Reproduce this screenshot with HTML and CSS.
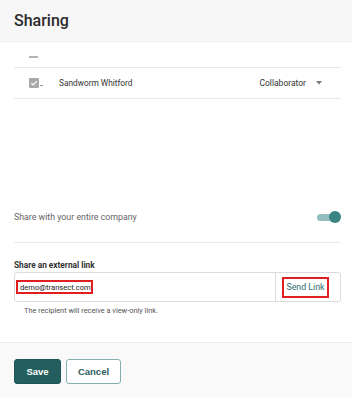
FILE: index.html
```html
<!DOCTYPE html>
<html>
<head>
<meta charset="utf-8">
<link rel="stylesheet" href="styles.css">
</head>
<body>
<div class="dialog">
  <header class="header"><h1 class="title">Sharing</h1></header>
  <main class="content">
    <div class="row row-head"><span class="dash"></span></div>
    <div class="row row-user">
      <span class="check"><svg width="10" height="10" viewBox="0 0 10 10"><rect width="10" height="10" rx="1" fill="#a9a9a9"/><path d="M2.3 5.2 L4.2 7 L7.8 3.2" fill="none" stroke="#fff" stroke-width="1.1"/></svg><span class="check-tail"></span></span>
      <span class="name">Sandworm Whitford</span>
      <span class="role">Collaborator <svg class="caret" width="6" height="4" viewBox="0 0 6 4"><path d="M0 0 H6 L3 3.5 Z" fill="#777"/></svg></span>
    </div>
    <div class="spacer"></div>
    <div class="company">
      <span class="company-label">Share with your entire company</span>
      <span class="toggle"><span class="track"></span><span class="knob"></span></span>
    </div>
    <div class="external">
      <div class="ext-label">Share an external link</div>
      <div class="ext-input">
        <div class="email-wrap"><span class="email">demo@transect.com</span></div>
        <div class="send-wrap"><span class="send">Send Link</span></div>
      </div>
      <div class="hint">The recipient will receive a view-only link.</div>
    </div>
  </main>
  <footer class="footer">
    <button class="btn btn-save">Save</button>
    <button class="btn btn-cancel">Cancel</button>
  </footer>
</div>
</body>
</html>
```
FILE: styles.css
```css
* { box-sizing: border-box; }
html, body { margin: 0; padding: 0; background: #fff; }
body { font-family: Roboto, "Liberation Sans", sans-serif; width: 352px; height: 397px; overflow: hidden; }
.dialog { display: flex; flex-direction: column; height: 397px; }
.header { height: 42px; background: #f7f7f7; border-bottom: 1px solid #eeeeee; display: flex; align-items: center; padding-left: 14px; }
.title { margin: 0; font-size: 16px; font-weight: 500; color: #2b2b2b; }
.content { flex: 1; padding: 0 11px 0 14px; display: flex; flex-direction: column; }
.row { display: flex; align-items: center; border-bottom: 1px solid #e8e8e8; }
.row-head { height: 26px; padding-left: 15px; }
.dash { width: 9px; height: 1.5px; background: #b5b5b5; margin-top: 5px; }
.row-user { height: 31px; padding-left: 15px; }
.check { display: flex; align-items: center; width: 30px; }
.check svg { display: block; }
.check-tail { width: 3px; height: 1px; background: #999; margin-left: 1px; margin-top: 5px; }
.name { font-size: 8.3px; color: #333; flex: 1; }
.role { font-size: 8.5px; color: #333; display: flex; align-items: center; margin-right: 19px; }
.caret { margin-left: 10px; }
.spacer { height: 105px; }
.company { height: 39px; display: flex; align-items: center; justify-content: space-between; border-bottom: 1px solid #eaeaea; padding-bottom: 13px; }
.company-label { font-size: 8.8px; color: #666; }
.toggle { position: relative; width: 24px; height: 14px; display: block; }
.track { position: absolute; left: 0; top: 4px; width: 22px; height: 7px; border-radius: 4px; background: #93bdbd; }
.knob { position: absolute; right: 0; top: 1px; width: 12px; height: 12px; border-radius: 50%; background: #3b8484; }
.external { padding-top: 17px; }
.ext-label { font-size: 8.3px; font-weight: 700; color: #333; height: 11px; line-height: 11px; }
.ext-input { margin-top: 1px; height: 30px; border: 1px solid #dcdcdc; border-radius: 3px; display: flex; }
.email-wrap { flex: 1; display: flex; align-items: center; padding-left: 1px; }
.email { border: 2px solid #e02020; font-size: 7.6px; color: #222; padding: 0 2px; height: 14px; width: 77px; display: flex; align-items: center; white-space: nowrap; }
.send-wrap { width: 65px; border-left: 1px solid #dcdcdc; display: flex; align-items: center; padding-left: 6px; }
.send { border: 2px solid #e02020; font-size: 8.8px; color: #2f6c6c; height: 21px; width: 47px; display: flex; align-items: center; justify-content: center; white-space: nowrap; }
.hint { font-size: 7.4px; color: #555; padding-left: 10px; margin-top: 4px; }
.footer { height: 55px; border-top: 1px solid #ececec; background: #f9f9f9; display: flex; align-items: flex-start; padding: 16px 14px 0; gap: 5px; }
.btn { font-family: "Liberation Sans", Arial, sans-serif; font-weight: 700; font-size: 9.5px; height: 25px; border-radius: 3px; cursor: pointer; padding: 0; }
.btn-save { width: 47px; background: #245f5f; color: #fff; border: 1px solid #1f5555; }
.btn-cancel { width: 55px; background: #fff; color: #2c5e5e; border: 1px solid #86aeae; }
```
